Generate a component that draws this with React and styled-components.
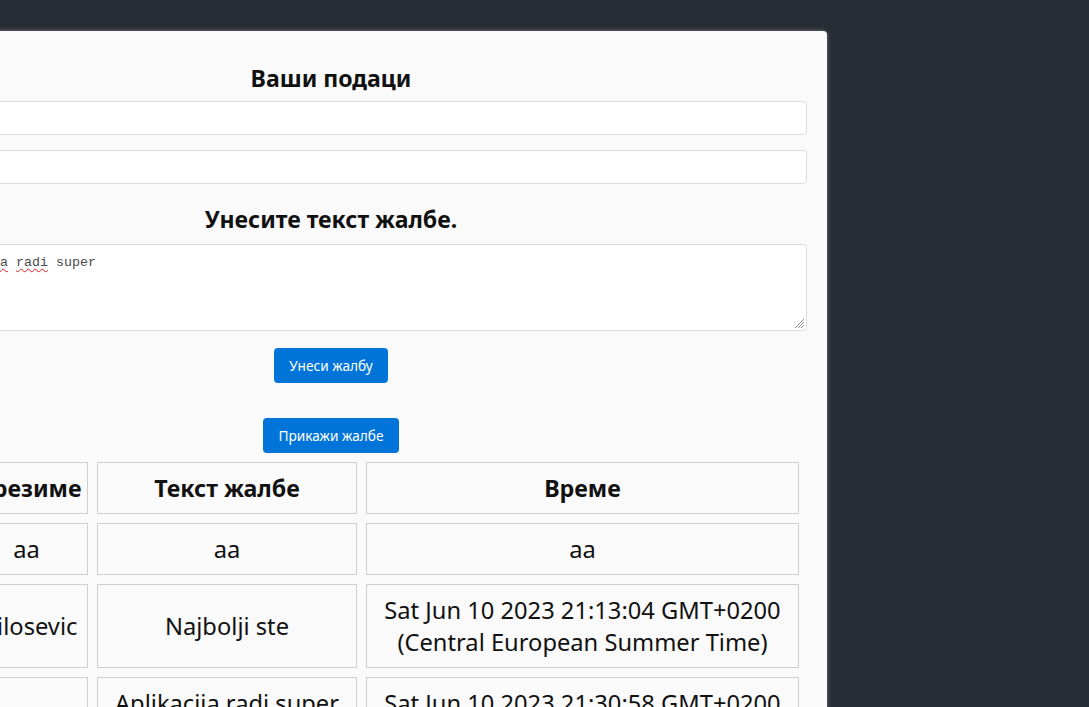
import React from 'react'
import styled, { createGlobalStyle } from 'styled-components'

const GlobalStyle = createGlobalStyle`
  html, body {
    margin: 0;
    padding: 0;
    background: #282c34;
    overflow: hidden;
  }
  body {
    font-family: 'Noto Sans', 'Open Sans', sans-serif;
    color: #111;
  }
`

const Page = styled.div`
  display: flex;
  justify-content: flex-end;
  padding: 31px 262px 0 0;
  min-height: 100vh;
  box-sizing: border-box;
`

const Panel = styled.div`
  flex: 0 0 992px;
  width: 992px;
  box-sizing: border-box;
  padding: 20px;
  background: #fafafa;
  border-radius: 4px;
  box-shadow: 0 0 4px rgba(255, 255, 255, 0.35);
  text-align: center;
`

const Heading = styled.h2`
  font-size: 23.1px;
  line-height: 32px;
  font-weight: 700;
  margin: ${p => p.$top || 11}px 0 ${p => p.$bottom || 7}px;
`

const Input = styled.input`
  display: block;
  width: 100%;
  height: 34px;
  box-sizing: border-box;
  border: 1px solid #dcdcdc;
  border-radius: 4px;
  background: #fff;
  margin: 0 0 ${p => p.$gap || 0}px;
  padding: 6px 10px;
  font: inherit;
`

const TextBox = styled.div`
  position: relative;
  height: 87px;
  box-sizing: border-box;
  border: 1px solid #dcdcdc;
  border-radius: 4px;
  background: #fff;
  padding: 10px 8px 8px;
  text-align: left;
  font-family: 'Liberation Mono', monospace;
  font-size: 13.33px;
  line-height: 15px;
  color: #4a4a4a;
  white-space: pre;
`

const Misspelled = styled.span`
  text-decoration: underline wavy #e0191c;
  text-decoration-thickness: 1px;
  text-underline-offset: 2px;
`

const Grip = styled.svg`
  position: absolute;
  right: 1px;
  bottom: 1px;
`

const ButtonRow = styled.div`
  margin-top: ${p => p.$top}px;
`

const Button = styled.button`
  display: inline-block;
  background: #0074d9;
  color: #fff;
  border: none;
  border-radius: 4px;
  padding: 8px 15px;
  font-family: 'Noto Sans', 'Open Sans', sans-serif;
  font-size: 13.7px;
  line-height: 19px;
  cursor: pointer;
`

const Table = styled.table`
  width: 100%;
  table-layout: fixed;
  border-collapse: separate;
  border-spacing: 9px;
`

const Th = styled.th`
  width: ${p => p.$w}px;
  box-sizing: border-box;
  border: 1px solid #cfcfcf;
  padding: 9px;
  font-size: 23.2px;
  line-height: 32px;
  font-weight: 700;
`

const Td = styled.td`
  border: 1px solid #cfcfcf;
  padding: 9px;
  font-size: 23.7px;
  line-height: 32px;
  font-weight: 400;
  vertical-align: middle;
  text-align: center;
`

const columns = [
  { title: 'Име', w: 92 },
  { title: 'Презиме', w: 123 },
  { title: 'Текст жалбе', w: 260 },
  { title: 'Време', w: 433 },
]

const complaints = [
  { ime: 'aa', prezime: 'aa', tekst: 'aa', vreme: 'aa' },
  {
    ime: 'Marko',
    prezime: 'Milosevic',
    tekst: 'Najbolji ste',
    vreme: 'Sat Jun 10 2023 21:13:04 GMT+0200 (Central European Summer Time)',
  },
  {
    ime: 'Ana',
    prezime: 'Jovic',
    tekst: 'Aplikacija radi super brzo',
    vreme: 'Sat Jun 10 2023 21:30:58 GMT+0200 (Central European Summer Time)',
  },
]

const App = () => {
  return (
    <>
      <GlobalStyle />
      <Page>
        <Panel>
          <Heading>Ваши подаци</Heading>
          <Input $gap={15} />
          <Input />
          <Heading $top={19} $bottom={9}>Унесите текст жалбе.</Heading>
          <TextBox>
            Ova web <Misspelled>aplikacija</Misspelled> <Misspelled>radi</Misspelled> super
            <Grip width="11" height="11" viewBox="0 0 11 11">
              <path d="M10 1 L1 10 M10 4 L4 10 M10 7 L7 10" stroke="#888" strokeWidth="1" fill="none" />
            </Grip>
          </TextBox>
          <ButtonRow $top={17}>
            <Button>Унеси жалбу</Button>
          </ButtonRow>
          <ButtonRow $top={35}>
            <Button>Прикажи жалбе</Button>
          </ButtonRow>
          <Table>
            <thead>
              <tr>
                {columns.map(c => (
                  <Th key={c.title} $w={c.w}>{c.title}</Th>
                ))}
              </tr>
            </thead>
            <tbody>
              {complaints.map((c, i) => (
                <tr key={i}>
                  <Td>{c.ime}</Td>
                  <Td>{c.prezime}</Td>
                  <Td>{c.tekst}</Td>
                  <Td>{c.vreme}</Td>
                </tr>
              ))}
            </tbody>
          </Table>
        </Panel>
      </Page>
    </>
  )
}

export default App
